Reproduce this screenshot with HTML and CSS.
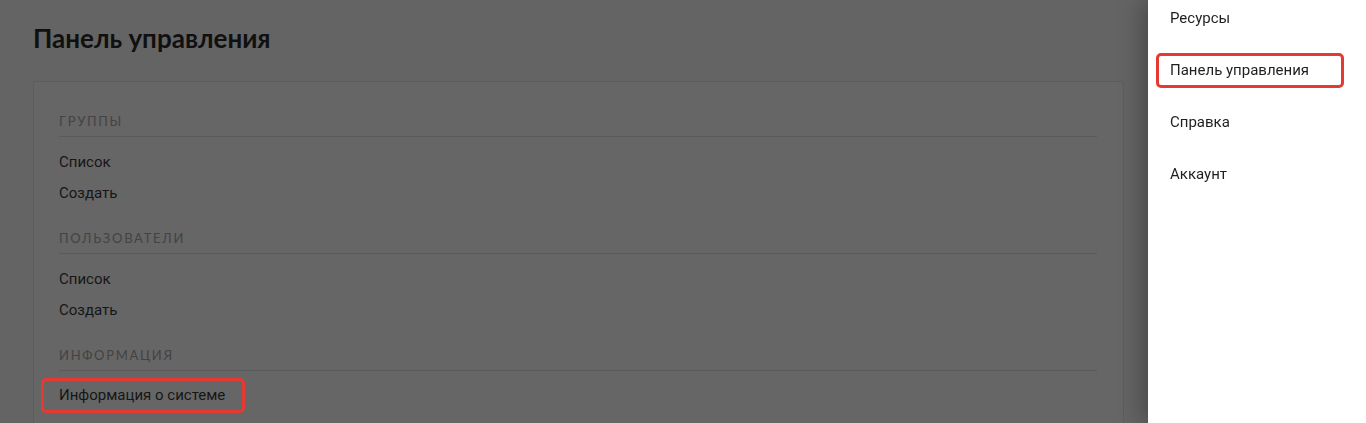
FILE: index.html
```html
<!DOCTYPE html>
<html lang="ru">
<head>
<meta charset="utf-8">
<title>Панель управления</title>
<link rel="stylesheet" href="styles.css">
</head>
<body>
<main class="page">
  <h1 class="page-title">Панель управления</h1>
  <section class="card">
    <div class="group">
      <h2 class="group-title">Группы</h2>
      <ul class="group-list">
        <li class="group-item">Список</li>
        <li class="group-item">Создать</li>
      </ul>
    </div>
    <div class="group">
      <h2 class="group-title">Пользователи</h2>
      <ul class="group-list">
        <li class="group-item">Список</li>
        <li class="group-item">Создать</li>
      </ul>
    </div>
    <div class="group">
      <h2 class="group-title">Информация</h2>
      <ul class="group-list">
        <li class="group-item"><span class="mark">Информация о системе</span></li>
      </ul>
    </div>
  </section>
</main>
<aside class="drawer">
  <nav class="drawer-nav">
    <a class="drawer-item">Ресурсы</a>
    <a class="drawer-item drawer-item--marked">Панель управления</a>
    <a class="drawer-item">Справка</a>
    <a class="drawer-item">Аккаунт</a>
  </nav>
</aside>
</body>
</html>
```

FILE: styles.css
```css
* { box-sizing: border-box; }

html, body {
  margin: 0;
  height: 100%;
  overflow: hidden;
}

body {
  background: #646464;
  font-family: Roboto, "Noto Sans", sans-serif;
}

.page {
  padding: 22px 0 0 33px;
}

.page-title {
  margin: 0 0 27px;
  font-family: Lato, "Noto Sans", sans-serif;
  font-weight: 700;
  font-size: 26px;
  line-height: 32px;
  color: #101010;
}

.card {
  width: 1091px;
  min-height: 400px;
  background: #666666;
  border: 1px solid #5d5d5d;
  border-radius: 3px;
  padding: 31px 26px 0 25px;
}

.group + .group { margin-top: 21px; }

.group-title {
  margin: 0;
  padding-bottom: 7px;
  border-bottom: 1px solid #5a5a5a;
  font-family: Lato, "Noto Sans", sans-serif;
  font-weight: 400;
  font-size: 13px;
  line-height: 16px;
  letter-spacing: 1.7px;
  text-transform: uppercase;
  color: #434343;
}

.group-list {
  list-style: none;
  margin: 0;
  padding: 10px 0 0;
}

.group-item {
  font-size: 15px;
  line-height: 31px;
  color: #161616;
}

.mark {
  display: inline-block;
  vertical-align: top;
  margin: -3px 0 0 -18px;
  padding: 0 17px 0 15px;
  border: 3px solid #e53a33;
  border-radius: 5px;
  line-height: 29px;
}

.drawer {
  position: fixed;
  top: 0;
  right: 0;
  bottom: 0;
  width: 218px;
  background: #ffffff;
  box-shadow: -6px 0 22px rgba(0, 0, 0, 0.28);
}

.drawer-nav {
  display: flex;
  flex-direction: column;
  gap: 17px;
  padding: 1px 22px 0 8px;
}

.drawer-item {
  display: block;
  padding: 0 11px;
  border: 3px solid transparent;
  border-radius: 5px;
  font-size: 15px;
  line-height: 29px;
  color: #1f1f1f;
}

.drawer-item--marked {
  border-color: #e53a33;
}
```
